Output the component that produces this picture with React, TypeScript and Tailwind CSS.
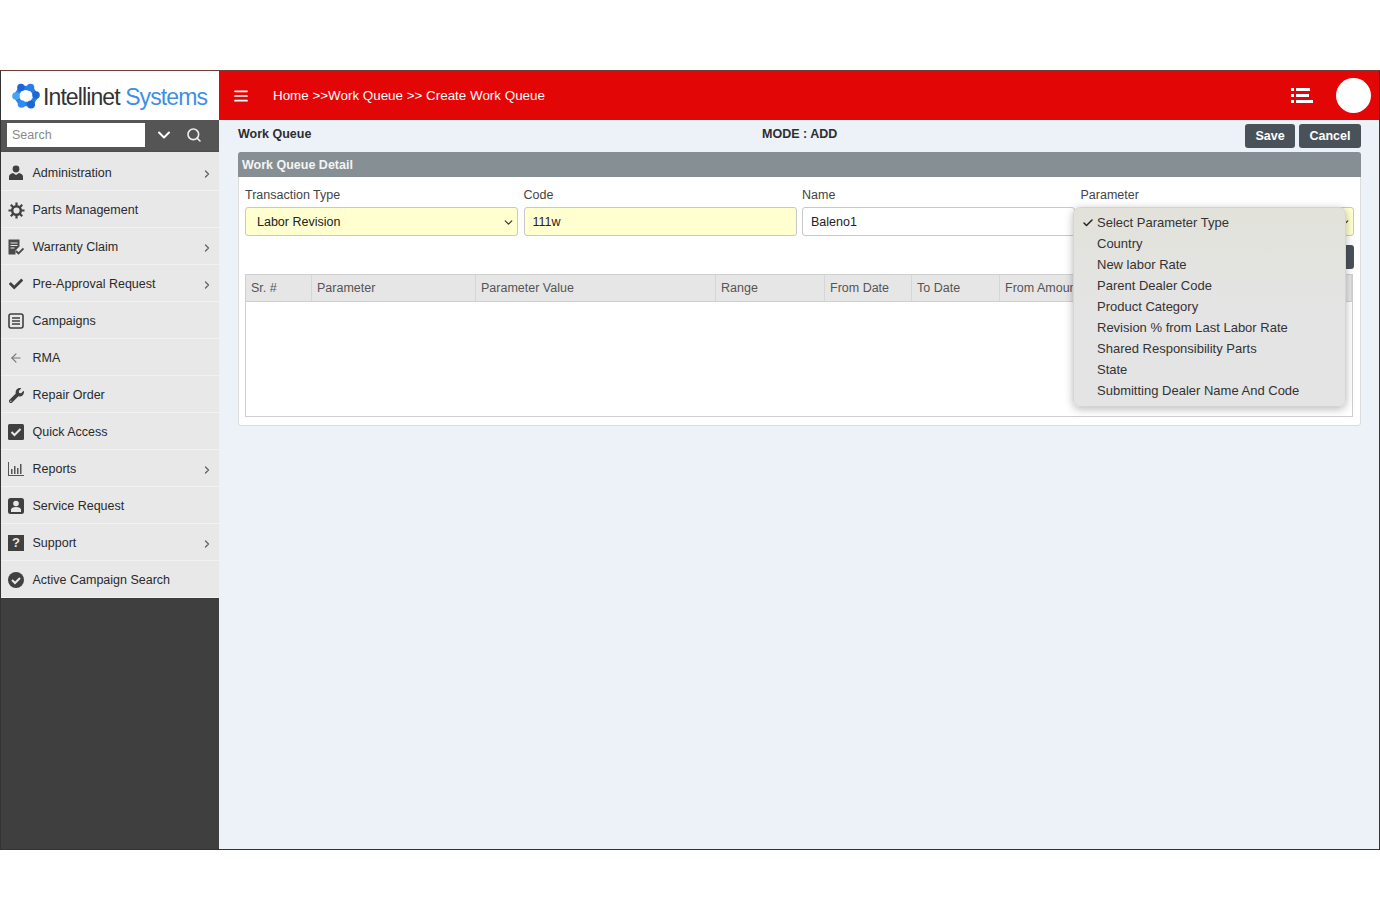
import { AlignJustify, ChevronDown, ChevronRight, Search, Check, ArrowLeft } from 'lucide-react';
import { FaCheck, FaWrench } from 'react-icons/fa';
import type { ReactNode } from 'react';

// =============================================================================
// Small icons drawn by hand (no matching package icon)
// =============================================================================

function Logo() {
  return (
    <svg width="28" height="26" viewBox="0 0 28 26" className="shrink-0">
      <path d="M9 5h10l5.500 8-5.500 8H9L3.500 13z" fill="none" stroke="#2a80e8" strokeWidth="4.500" strokeLinejoin="round" />
      <circle cx="9" cy="4.500" r="3.800" fill="#1c66d6" />
      <circle cx="18.500" cy="4.500" r="3.800" fill="#2a7ce6" />
      <circle cx="24" cy="12" r="3.800" fill="#1c66d6" />
      <circle cx="19" cy="21.500" r="4" fill="#1c66d6" />
      <circle cx="9.500" cy="21" r="3.800" fill="#2f8bee" />
      <circle cx="4" cy="13" r="3.800" fill="#45a4f5" />
    </svg>
  );
}

function PersonIcon() {
  return (
    <svg width="16" height="16" viewBox="0 0 16 16" fill="#404040">
      <circle cx="8" cy="4" r="3.400" />
      <path d="M1 15v-3.500C1 9.500 3 8.500 5 8l3 2 3-2c2 .5 4 1.500 4 3.500V15z" />
    </svg>
  );
}

function GearIcon() {
  return (
    <svg width="17" height="17" viewBox="0 0 17 17" fill="none" stroke="#404040">
      <circle cx="8.500" cy="8.500" r="4.300" strokeWidth="2.400" />
      <path d="M8.500 0.500v3M8.500 13.500v3M0.500 8.500h3M13.500 8.500h3M2.800 2.800l2.200 2.200M12 12l2.200 2.200M14.200 2.800L12 5M5 12l-2.200 2.200" strokeWidth="2.200" />
    </svg>
  );
}

function ClaimIcon() {
  return (
    <svg width="16" height="16" viewBox="0 0 16 16">
      <path d="M0.500 0.500h11v7l-4 4v4h-7z" fill="#4a4a4a" />
      <path d="M2.500 4h7M2.500 6.500h7M2.500 9h4" stroke="#e8e8e8" strokeWidth="1" />
      <path d="M8 12l2.500 2.500 5-5" stroke="#4a4a4a" strokeWidth="1.800" fill="none" />
    </svg>
  );
}

function ListBoxIcon() {
  return (
    <svg width="16" height="16" viewBox="0 0 16 16" fill="none">
      <rect x="1" y="1" width="14" height="14" rx="2" stroke="#404040" strokeWidth="1.600" />
      <path d="M4 5h8M4 8h8M4 11h8" stroke="#404040" strokeWidth="1.500" />
    </svg>
  );
}

function CheckSquareIcon() {
  return (
    <svg width="16" height="16" viewBox="0 0 16 16">
      <rect width="16" height="16" rx="1.500" fill="#404040" />
      <path d="M3.500 8l3 3 6-6" stroke="#e8e8e8" strokeWidth="2" fill="none" />
    </svg>
  );
}

function BarsIcon() {
  return (
    <svg width="16" height="14" viewBox="0 0 16 14" fill="#555555">
      <rect x="0" y="0" width="1" height="13" />
      <rect x="0" y="13" width="16" height="1" />
      <rect x="3" y="7" width="1.500" height="5" />
      <rect x="6" y="4" width="1.500" height="8" />
      <rect x="9" y="6" width="1.500" height="6" />
      <rect x="12" y="2" width="1.500" height="10" />
    </svg>
  );
}

function PersonSquareIcon() {
  return (
    <svg width="16" height="16" viewBox="0 0 16 16">
      <rect width="16" height="16" rx="2.500" fill="#404040" />
      <circle cx="8" cy="5.500" r="2.800" fill="#e8e8e8" />
      <path d="M3 14v-2c0-2 2-3 5-3s5 1 5 3v2z" fill="#e8e8e8" />
    </svg>
  );
}

function HelpSquareIcon() {
  return (
    <div className="w-4 h-4 bg-[#404040] text-[#e8e8e8] text-[13px] font-bold leading-4 text-center">?</div>
  );
}

function CheckCircleIcon() {
  return (
    <svg width="16" height="16" viewBox="0 0 16 16">
      <circle cx="8" cy="8" r="8" fill="#404040" />
      <path d="M4 8l3 3 5-5" stroke="#e8e8e8" strokeWidth="2" fill="none" />
    </svg>
  );
}

function TaskListIcon() {
  return (
    <svg width="22" height="15" viewBox="0 0 22 15" fill="#ffffff">
      <rect x="0" y="0" width="3" height="3" />
      <rect x="5" y="0" width="14" height="3" />
      <rect x="0" y="6" width="3" height="3" />
      <rect x="5" y="6" width="13" height="3" />
      <rect x="0" y="12" width="3" height="3" />
      <rect x="5" y="12" width="17" height="3" />
    </svg>
  );
}

// =============================================================================
// Data
// =============================================================================

interface MenuItem {
  label: string;
  icon: ReactNode;
  arrow?: boolean;
}

const MENU: MenuItem[] = [
  { label: 'Administration', icon: <PersonIcon />, arrow: true },
  { label: 'Parts Management', icon: <GearIcon /> },
  { label: 'Warranty Claim', icon: <ClaimIcon />, arrow: true },
  { label: 'Pre-Approval Request', icon: <FaCheck size={14} className="text-[#404040]" />, arrow: true },
  { label: 'Campaigns', icon: <ListBoxIcon /> },
  { label: 'RMA', icon: <ArrowLeft size={14} strokeWidth={2} className="text-[#777777]" /> },
  { label: 'Repair Order', icon: <FaWrench size={15} className="text-[#404040]" /> },
  { label: 'Quick Access', icon: <CheckSquareIcon /> },
  { label: 'Reports', icon: <BarsIcon />, arrow: true },
  { label: 'Service Request', icon: <PersonSquareIcon /> },
  { label: 'Support', icon: <HelpSquareIcon />, arrow: true },
  { label: 'Active Campaign Search', icon: <CheckCircleIcon /> },
];

const COLUMNS = [
  { label: 'Sr. #', width: 'w-[66px]' },
  { label: 'Parameter', width: 'w-[164px]' },
  { label: 'Parameter Value', width: 'w-[240px]' },
  { label: 'Range', width: 'w-[109px]' },
  { label: 'From Date', width: 'w-[87px]' },
  { label: 'To Date', width: 'w-[88px]' },
  { label: 'From Amount', width: 'flex-1' },
];

const OPTIONS = [
  'Select Parameter Type',
  'Country',
  'New labor Rate',
  'Parent Dealer Code',
  'Product Category',
  'Revision % from Last Labor Rate',
  'Shared Responsibility Parts',
  'State',
  'Submitting Dealer Name And Code',
];

// =============================================================================
// Component
// =============================================================================

function Sidebar() {
  return (
    <aside className="w-[218px] shrink-0 flex flex-col bg-[#3f3f3f]">
      <div className="h-[49px] bg-white flex items-center pl-[11px] gap-[3px]">
        <Logo />
        <span className="text-[23px] tracking-[-0.9px] text-[#333333] whitespace-nowrap mt-[3px]">
          Intellinet <span className="text-[#3f8fe6]">Systems</span>
        </span>
      </div>
      <div className="h-[32px] bg-[#555555] flex items-center pl-[6px] pb-[2px]">
        <div className="w-[138px] h-[24px] bg-white text-[12.500px] text-[#8a8a8a] pl-[5px] leading-[24px]">Search</div>
        <ChevronDown size={20} strokeWidth={2.400} className="text-white ml-[9px]" />
        <Search size={16} strokeWidth={2.400} className="text-[#eeeeee] ml-[12px]" />
      </div>
      <nav className="bg-[#e8e8e8] pt-[2px] shadow-[1px_0_2px_rgba(0,0,0,0.25)]">
        {MENU.map((item) => (
          <div key={item.label} className="h-[37px] flex items-center border-b border-[#f2f2f2] pl-[6px] pr-[6px] pt-[2px] text-[12.500px] text-[#2a2a2a]">
            <div className="w-[18px] flex justify-center">{item.icon}</div>
            <span className="ml-[7.500px] flex-1">{item.label}</span>
            {item.arrow && <ChevronRight size={12} strokeWidth={2.800} className="text-[#666666] mt-[2px]" />}
          </div>
        ))}
      </nav>
    </aside>
  );
}

function Field({ label, value, yellow, select, width }: { label: string; value: string; yellow?: boolean; select?: boolean; width: string }) {
  return (
    <div className={`${width} shrink-0`}>
      <div className="text-[12.500px] leading-[16px] text-[#444444] mb-[4px]">{label}</div>
      <div className={`h-[29px] flex items-center justify-between rounded-[3px] border border-[#c8c8c8] pt-[1px] text-[12.500px] text-[#222222] ${select ? 'pl-[11px] pr-[2px]' : 'pl-[8px]'} ${yellow ? 'bg-[#ffffcf]' : 'bg-white'}`}>
        <span>{value}</span>
        {select && <ChevronDown size={13} strokeWidth={2.200} className="text-[#333333]" />}
      </div>
    </div>
  );
}

function ParameterMenu() {
  return (
    <div className="absolute left-[834px] top-[54px] w-[273px] h-[200px] pt-[4px] rounded-[7px] bg-linear-to-b from-[#e2e2da] via-[#e4e4e4] to-[#e4e4e4] border border-[#d4d4d4] shadow-[0_2px_8px_rgba(0,0,0,0.28)]">
      {OPTIONS.map((option, i) => (
        <div key={option} className="h-[21px] flex items-center text-[13px] text-[#333333]">
          <span className="w-[23px] flex justify-end pr-[3px]">
            {i === 0 && <Check size={12} strokeWidth={3} className="text-[#222222]" />}
          </span>
          {option}
        </div>
      ))}
    </div>
  );
}

function DetailCard() {
  return (
    <section className="relative ml-[19px] mr-[18px] bg-white rounded-[3px] border border-[#dcdcdc] h-[274px]">
      <div className="h-[25px] -mx-px -mt-px bg-[#869094] rounded-t-[3px] pl-[4px] text-[12.500px] leading-[27px] font-bold text-[#f4f4f4]">
        Work Queue Detail
      </div>
      <div className="flex gap-[5.500px] pl-[6px] pt-[10px]">
        <Field label="Transaction Type" value="Labor Revision" yellow select width="w-[273px]" />
        <Field label="Code" value="111w" yellow width="w-[273px]" />
        <Field label="Name" value="Baleno1" width="w-[273px]" />
        <Field label="Parameter" value="" yellow select width="w-[273px]" />
      </div>
      <div className="flex justify-end pr-[6px] h-[24px] mt-[9px]">
        <div className="w-[40px] bg-[#4a5259] rounded-[3px]" />
      </div>
      <div className="ml-[6px] mr-[7px] mt-[5px] h-[143px] border border-[#d0d0d0]">
        <div className="h-[27px] flex bg-[#e6e6e6] border-b border-[#d0d0d0]">
          {COLUMNS.map((col) => (
            <div key={col.label} className={`${col.width} pl-[5px] border-r border-[#d6d6d6] text-[12.500px] leading-[27px] text-[#555555] whitespace-nowrap overflow-hidden`}>
              {col.label}
            </div>
          ))}
        </div>
      </div>
      <ParameterMenu />
    </section>
  );
}

export default function App() {
  return (
    <div className="h-[920px] bg-white pt-[70px] pb-[70px] font-['Liberation_Sans',Arial,sans-serif]">
      <div className="h-[780px] flex border-t border-b border-x border-[#333333] border-t-[#7a3a3a] overflow-hidden">
        <Sidebar />
        <main className="flex-1 flex flex-col bg-[#edf1f8]">
          <header className="h-[49px] shrink-0 bg-[#e30606] flex items-center pl-[14px] pr-[8px] text-white">
            <AlignJustify size={16} strokeWidth={2.600} />
            <span className="ml-[24px] pt-[1px] text-[13.400px] flex-1">Home &gt;&gt;Work Queue &gt;&gt; Create Work Queue</span>
            <TaskListIcon />
            <div className="w-[35px] h-[35px] rounded-full bg-white ml-[23px]" />
          </header>
          <div className="relative h-[32px] shrink-0 flex items-center pl-[19px] pr-[18px]">
            <span className="text-[12.500px] font-bold text-[#2e2e2e] -mt-[3px]">Work Queue</span>
            <span className="absolute left-[543px] top-[5px] text-[12.500px] font-bold text-[#2e2e2e]">MODE : ADD</span>
            <div className="ml-auto flex gap-[4px]">
              <button className="w-[50px] h-[24px] rounded-[3px] bg-[#4a5259] text-white text-[12.500px] font-bold">Save</button>
              <button className="w-[62px] h-[24px] rounded-[3px] bg-[#4a5259] text-white text-[12.500px] font-bold">Cancel</button>
            </div>
          </div>
          <DetailCard />
        </main>
      </div>
    </div>
  );
}
